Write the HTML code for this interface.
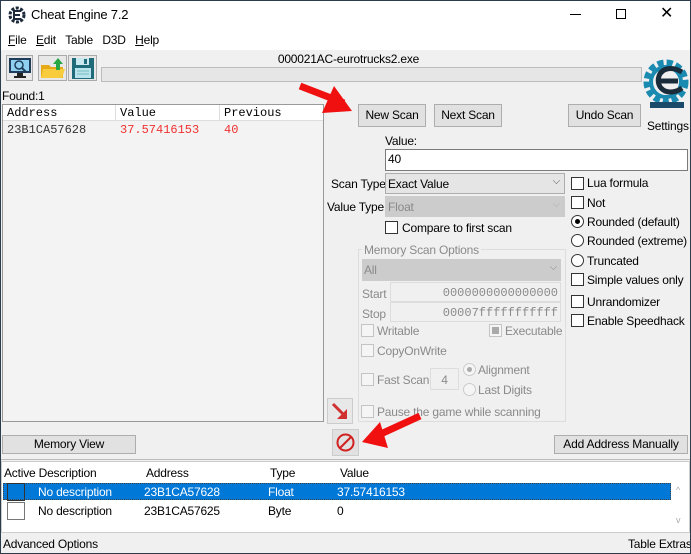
<!DOCTYPE html>
<html><head><meta charset="utf-8"><style>
*{box-sizing:border-box;margin:0;padding:0}
body{width:691px;height:554px;overflow:hidden;background:#f0f0f0;font-family:"Liberation Sans",sans-serif;font-size:12px;color:#000;position:relative;letter-spacing:-0.2px}
.a{position:absolute;white-space:nowrap}
.btn{position:absolute;background:#e1e1e1;border:1px solid #adadad;text-align:center;font-size:12px;line-height:20px;white-space:nowrap}
.cb{position:absolute;width:13px;height:13px;border:1px solid #333;background:#fff}
.rb{position:absolute;width:13px;height:13px;border:1px solid #333;border-radius:50%;background:#fff}
.dis{color:#8a8a8a}
.cbd{position:absolute;width:13px;height:13px;border:1px solid #c4c4c4;background:#f5f5f5}
.mono{font-family:"Liberation Mono",monospace;letter-spacing:0}
</style></head><body>
<div class="a" style="left:0;top:0;width:691px;height:554px;border:1px solid #2d3c4c;z-index:10;pointer-events:none"></div>
<div class="a" style="left:0;top:0;width:691px;height:50px;background:#fff"></div>
<svg class="a" style="left:8px;top:6px" width="18" height="18" viewBox="0 0 18 18"><circle cx="9" cy="9" r="7" fill="none" stroke="#1c2a3c" stroke-width="3" stroke-dasharray="3 1.5"/><path d="M13 5H6v8h7M6 9h6" stroke="#1c2a3c" stroke-width="2" fill="none"/></svg>
<div class="a" style="left:31px;top:7px;font-size:13px">Cheat Engine 7.2</div>
<div class="a" style="left:570px;top:14px;width:11px;height:1px;background:#000"></div>
<div class="a" style="left:616px;top:9px;width:10px;height:10px;border:1px solid #000"></div>
<div class="a" style="left:660px;top:3px;font-size:16px">✕</div>
<div class="a" style="left:8px;top:33px;font-size:12px"><u>F</u>ile&nbsp;&nbsp;&nbsp;<u>E</u>dit&nbsp;&nbsp;&nbsp;Table&nbsp;&nbsp;&nbsp;D3D&nbsp;&nbsp;&nbsp;<u>H</u>elp</div>
<!-- toolbar -->
<div class="a" style="left:6px;top:55px;width:27px;height:26px;border:1px solid #aaa;background:#e8e8e8"></div>
<svg class="a" style="left:8px;top:57px" width="24" height="22"><rect x="1" y="1" width="22" height="15" fill="#1f3d5a"/><rect x="3" y="3" width="18" height="11" fill="#8fd0f0"/><circle cx="11" cy="8" r="4" fill="none" stroke="#1f3d5a" stroke-width="1.5"/><path d="M14 11l4 4" stroke="#1f3d5a" stroke-width="2"/><rect x="9" y="16" width="6" height="3" fill="#222"/><rect x="6" y="19" width="12" height="2" fill="#222"/></svg>
<div class="a" style="left:38px;top:55px;width:29px;height:26px;border:1px solid #aaa;background:#e8e8e8"></div>
<svg class="a" style="left:40px;top:57px" width="26" height="22"><path d="M1 8h8l2 2h12v11H1z" fill="#e8a917"/><path d="M3 12h22l-3 9H1z" fill="#f8cc3c"/><path d="M18 1l5 6h-3v6h-4V7h-3z" fill="#27a844"/></svg>
<div class="a" style="left:68px;top:55px;width:29px;height:26px;border:1px solid #aaa;background:#e8e8e8"></div>
<svg class="a" style="left:71px;top:57px" width="24" height="22"><rect x="1" y="1" width="22" height="21" fill="#1f6b7a"/><rect x="5" y="1" width="13" height="7" fill="#c9e8ef"/><rect x="13" y="2" width="3" height="5" fill="#1f6b7a"/><rect x="4" y="11" width="16" height="10" fill="#b9e4ee"/><path d="M6 14h12M6 17h12" stroke="#7bb" /></svg>
<div class="a" style="left:0;top:52px;width:691px;text-align:center;font-size:12px;padding-left:6px">000021AC-eurotrucks2.exe</div>
<div class="a" style="left:101px;top:67px;width:541px;height:15px;border:1px solid #bcbcbc;background:#e6e6e6"></div>
<!-- logo -->
<svg class="a" style="left:642px;top:52px" width="48" height="70" viewBox="0 0 48 70"><circle cx="24" cy="30" r="19" fill="none" stroke="#1a8ab0" stroke-width="7" stroke-dasharray="6 3"/><circle cx="24" cy="30" r="15" fill="none" stroke="#1a8ab0" stroke-width="4"/><path d="M40 20C30 14 20 16 17 24c-2 6 0 12 6 15 5 2 12 1 17-3M18 29h18" stroke="#1a2b3a" stroke-width="5" fill="none"/><rect x="8" y="50" width="34" height="6" fill="#1a4a6a"/></svg>
<div class="a" style="left:647px;top:119px;font-size:12px">Settings</div>
<div class="a" style="left:2px;top:89px">Found:1</div>
<!-- results list -->
<div class="a" style="left:2px;top:104px;width:322px;height:318px;border:1px solid #999;background:#f3f3f3"></div>
<div class="a" style="left:3px;top:105px;width:320px;height:16px;background:#fff;border-bottom:1px solid #ddd"></div>
<div class="a" style="left:115px;top:105px;width:1px;height:16px;background:#ddd"></div>
<div class="a" style="left:219px;top:105px;width:1px;height:16px;background:#ddd"></div>
<div class="a mono" style="left:7px;top:106px;font-size:12px">Address</div>
<div class="a mono" style="left:120px;top:106px;font-size:12px">Value</div>
<div class="a mono" style="left:224px;top:106px;font-size:12px">Previous</div>
<div class="a mono" style="left:7px;top:123px;font-size:12px;color:#333">23B1CA57628</div>
<div class="a mono" style="left:120px;top:123px;font-size:12px;color:#f03030">37.57416153</div>
<div class="a mono" style="left:224px;top:123px;font-size:12px;color:#f03030">40</div>
<!-- arrow 1 -->
<svg class="a" style="left:296px;top:78px" width="64" height="40"><path d="M4 8l44 17" stroke="#f01010" stroke-width="7"/><path d="M38 8l18 25-30 2z" fill="#f01010"/></svg>
<div class="btn" style="left:358px;top:104px;width:68px;height:23px">New Scan</div>
<div class="btn" style="left:434px;top:104px;width:68px;height:23px">Next Scan</div>
<div class="btn" style="left:568px;top:104px;width:73px;height:23px">Undo Scan</div>
<div class="a" style="left:385px;top:134px">Value:</div>
<div class="a" style="left:385px;top:149px;width:303px;height:22px;border:1px solid #7a7a7a;background:#fff;padding:2px 2px;font-size:12px">40</div>
<div class="a" style="left:331px;top:177px">Scan Type</div>
<div class="a" style="left:385px;top:173px;width:180px;height:21px;border:1px solid #adadad;background:#e5e5e5;padding:3px 2px">Exact Value<span style="position:absolute;right:4px;top:2px;font-size:10px;color:#555">⌵</span></div>
<div class="a" style="left:327px;top:200px">Value Type</div>
<div class="a dis" style="left:385px;top:196px;width:180px;height:21px;border:1px solid #ccc;background:#ccc;padding:3px 2px">Float<span style="position:absolute;right:4px;top:2px;font-size:10px;color:#aaa">⌵</span></div>
<div class="cb" style="left:385px;top:221px"></div><div class="a" style="left:402px;top:221px">Compare to first scan</div>
<div class="cb" style="left:571px;top:177px"></div><div class="a" style="left:587px;top:176px">Lua formula</div>
<div class="cb" style="left:571px;top:196px"></div><div class="a" style="left:587px;top:196px">Not</div>
<div class="rb" style="left:571px;top:215px"></div><div class="a" style="left:575px;top:219px;width:5px;height:5px;border-radius:50%;background:#000"></div><div class="a" style="left:587px;top:215px">Rounded (default)</div>
<div class="rb" style="left:571px;top:234px"></div><div class="a" style="left:587px;top:234px">Rounded (extreme)</div>
<div class="rb" style="left:571px;top:254px"></div><div class="a" style="left:587px;top:254px">Truncated</div>
<div class="cb" style="left:571px;top:273px"></div><div class="a" style="left:587px;top:273px">Simple values only</div>
<div class="cb" style="left:571px;top:295px"></div><div class="a" style="left:587px;top:295px">Unrandomizer</div>
<div class="cb" style="left:571px;top:314px"></div><div class="a" style="left:587px;top:314px">Enable Speedhack</div>
<!-- memory scan options -->
<div class="a" style="left:358px;top:249px;width:208px;height:173px;border:1px solid #ddd"></div>
<div class="a dis" style="left:362px;top:243px;background:#f0f0f0;padding:0 2px">Memory Scan Options</div>
<div class="a dis" style="left:362px;top:259px;width:199px;height:22px;background:#ccc;padding:4px 2px">All<span style="position:absolute;right:4px;top:3px;font-size:10px">⌵</span></div>
<div class="a dis" style="left:362px;top:287px">Start</div>
<div class="a dis mono" style="left:390px;top:282px;width:171px;height:20px;border:1px solid #ddd;text-align:right;padding:3px 2px;font-size:12px">0000000000000000</div>
<div class="a dis" style="left:362px;top:307px">Stop</div>
<div class="a dis mono" style="left:390px;top:302px;width:171px;height:20px;border:1px solid #ddd;text-align:right;padding:3px 2px;font-size:12px">00007fffffffffff</div>
<div class="cbd" style="left:361px;top:324px"></div><div class="a dis" style="left:377px;top:324px">Writable</div>
<div class="cbd" style="left:489px;top:324px"></div><div class="a" style="left:492px;top:327px;width:7px;height:7px;background:#aaa"></div><div class="a dis" style="left:505px;top:324px">Executable</div>
<div class="cbd" style="left:361px;top:344px"></div><div class="a dis" style="left:377px;top:344px">CopyOnWrite</div>
<div class="cbd" style="left:361px;top:373px"></div><div class="a dis" style="left:377px;top:373px">Fast Scan</div>
<div class="a dis" style="left:430px;top:368px;width:29px;height:22px;border:1px solid #ddd;text-align:center;padding-top:4px">4</div>
<div class="a" style="left:463px;top:363px;width:13px;height:13px;border:1px solid #ccc;border-radius:50%;background:#f5f5f5"></div><div class="a" style="left:467px;top:367px;width:5px;height:5px;border-radius:50%;background:#aaa"></div>
<div class="a dis" style="left:478px;top:363px">Alignment</div>
<div class="a" style="left:463px;top:383px;width:13px;height:13px;border:1px solid #ccc;border-radius:50%;background:#f5f5f5"></div>
<div class="a dis" style="left:478px;top:383px">Last Digits</div>
<div class="cbd" style="left:361px;top:405px"></div><div class="a dis" style="left:377px;top:405px">Pause the game while scanning</div>
<!-- small buttons -->
<div class="a" style="left:327px;top:398px;width:26px;height:26px;border:1px solid #ccc;background:#e8e8e8"></div>
<svg class="a" style="left:330px;top:401px" width="22" height="22"><path d="M3 3l11 11" stroke="#d03030" stroke-width="3"/><path d="M17 8v10H7z" fill="#d03030"/></svg>
<div class="a" style="left:332px;top:429px;width:27px;height:27px;border:1px solid #ccc;background:#e1e1e1"></div>
<svg class="a" style="left:334px;top:431px" width="23" height="23"><circle cx="11.5" cy="11.5" r="8" fill="none" stroke="#d02020" stroke-width="2"/><path d="M6 17L17 6" stroke="#d02020" stroke-width="2"/></svg>
<svg class="a" style="left:360px;top:410px" width="70" height="40"><path d="M12 28L60 6" stroke="#f01010" stroke-width="7"/><path d="M2 32l18-20 8 26z" fill="#f01010"/></svg>
<div class="btn" style="left:2px;top:435px;width:134px;height:19px;line-height:17px">Memory View</div>
<div class="btn" style="left:554px;top:435px;width:134px;height:19px;line-height:17px">Add Address Manually</div>
<!-- bottom list -->
<div class="a" style="left:1px;top:459px;width:689px;height:1px;background:#bbb"></div>
<div class="a" style="left:1px;top:461px;width:689px;height:72px;border:1px solid #ccc;background:#fff"></div>
<div class="a" style="left:4px;top:466px">Active Description</div>
<div class="a" style="left:146px;top:466px">Address</div>
<div class="a" style="left:270px;top:466px">Type</div>
<div class="a" style="left:340px;top:466px">Value</div>
<div class="a" style="left:3px;top:483px;width:668px;height:17px;background:#0078d7;border:1px dotted #444"></div>
<div class="a" style="left:7px;top:483px;width:18px;height:18px;border:1px solid #333"></div>
<div class="a" style="left:38px;top:485px;color:#fff">No description</div>
<div class="a" style="left:144px;top:485px;color:#fff">23B1CA57628</div>
<div class="a" style="left:268px;top:485px;color:#fff">Float</div>
<div class="a" style="left:337px;top:485px;color:#fff">37.57416153</div>
<div class="a" style="left:7px;top:502px;width:18px;height:18px;border:1px solid #777;background:#fff"></div>
<div class="a" style="left:38px;top:504px">No description</div>
<div class="a" style="left:144px;top:504px">23B1CA57625</div>
<div class="a" style="left:268px;top:504px">Byte</div>
<div class="a" style="left:337px;top:504px">0</div>
<div class="a" style="left:676px;top:485px;font-size:9px;color:#aaa">^</div>
<div class="a" style="left:676px;top:515px;font-size:9px;color:#aaa">v</div>
<div class="a" style="left:3px;top:537px">Advanced Options</div>
<div class="a" style="left:628px;top:537px">Table Extras</div>
</body></html>
